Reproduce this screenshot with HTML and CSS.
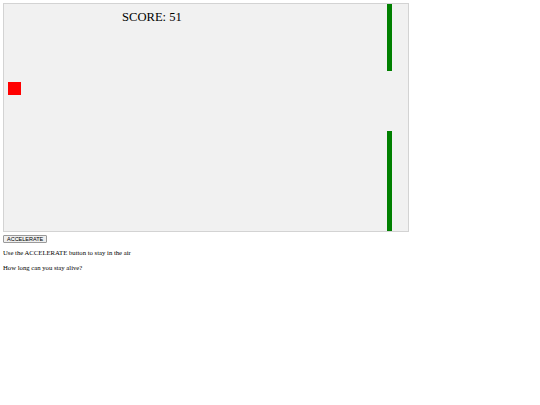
FILE: index.html
```html
<!DOCTYPE html>
<html>
<head>
<meta charset="utf-8">
<link rel="stylesheet" href="styles.css">
</head>
<body>
<div class="canvas">
  <div class="score">SCORE: 51</div>
  <div class="player"></div>
  <div class="pipe pipe-top"></div>
  <div class="pipe pipe-bottom"></div>
</div>
<button class="btn">ACCELERATE</button>
<p class="info">Use the ACCELERATE button to stay in the air</p>
<p class="info">How long can you stay alive?</p>
</body>
</html>
```
FILE: styles.css
```css
html, body {
  background: #ffffff;
}
body {
  margin: 3px;
  font-family: "Liberation Serif", "Times New Roman", serif;
}
.canvas {
  position: relative;
  width: 404px;
  height: 227px;
  border: 1px solid #d3d3d3;
  background: #f1f1f1;
}
.score {
  position: absolute;
  left: 118px;
  top: 5px;
  font-size: 12.6px;
  line-height: 16px;
  color: #000;
  white-space: nowrap;
}
.player {
  position: absolute;
  left: 4px;
  top: 78px;
  width: 13px;
  height: 13px;
  background: #ff0000;
}
.pipe {
  position: absolute;
  left: 383px;
  width: 5px;
  background: #008000;
}
.pipe-top {
  top: 0;
  height: 67px;
}
.pipe-bottom {
  top: 127px;
  bottom: 0;
}
.btn {
  display: block;
  margin: 3px 0 0 0;
  padding: 0 3px;
  height: 8px;
  font-family: "Liberation Sans", Arial, sans-serif;
  font-size: 5.5px;
  line-height: 6px;
  color: #000;
  background: #efefef;
  border: 1px solid #9a9a9a;
  border-radius: 1px;
}
.info {
  margin: 6px 0 7px 0;
  font-size: 6.7px;
  line-height: 8px;
  color: #000;
}
```
